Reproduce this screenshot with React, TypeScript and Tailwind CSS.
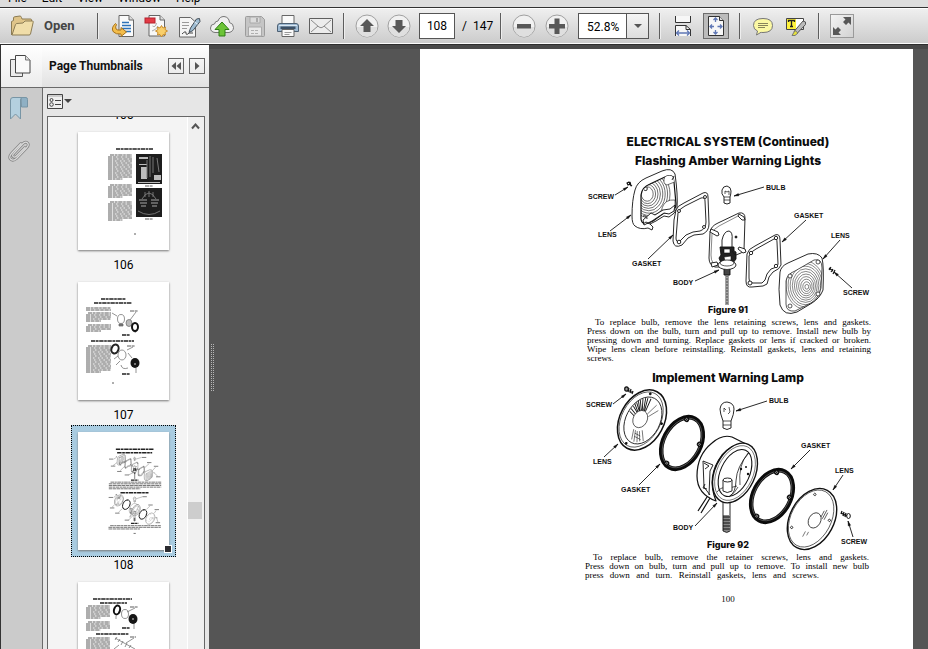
import type { ReactNode } from "react";

const menus = ["File", "Edit", "View", "Window", "Help"];

function Separator() {
  return <span className="mx-[10px] h-[26px] w-[2px] shrink-0 border-l border-[#5d5d5d] bg-[#eeeeee]" />;
}

function IconButton({ label, children }: { label: string; children: ReactNode }) {
  return (
    <button type="button" aria-label={label} className="flex size-6 shrink-0 items-center justify-center">
      {children}
    </button>
  );
}

function RoundIcon({ d }: { d: string }) {
  return (
    <svg viewBox="0 0 24 24" className="size-6">
      <circle cx="12" cy="12" r="11" fill="#f1f1f1" stroke="#a0a0a0" />
      <path d="M2 13a10 10 0 0 0 20 0z" fill="#dfdfdf" />
      <path d={d} fill="#585858" />
    </svg>
  );
}

function FolderIcon() {
  return (
    <svg viewBox="0 0 24 22" className="h-[22px] w-6">
      <path d="M1.5 20V6.5l2-1V3q0-1 1-1.200L10 1q1 0 1.500 1.500L12 4h8.500q1 0 1 1v3" fill="#dfc489" stroke="#8c7c55" />
      <path d="M2 20 5.500 9.500Q6 8.500 7 8.500L13 8l2-2h7.500q1 0 .7 1.200L20.500 19q-.3 1-1.500 1z" fill="#f0dda9" stroke="#8c7c55" />
    </svg>
  );
}

function ConvertIcon() {
  return (
    <svg viewBox="0 0 24 24" className="size-6">
      <path d="M8 1.500h10l4.500 4.500v16.500H8z" fill="#fafafa" stroke="#666" />
      <path d="M18 1.500v4.500h4.500" fill="#ddd" stroke="#666" />
      <path d="M11 8.500h7M11 11.500h9M11 14.500h9M14 17.500h6" stroke="#2f73b8" strokeWidth="1.400" />
      <path d="M4.500 9.500Q-.5 14 2.500 18q2.500 2.500 7.500 2v2.500l5.500-4.500-5.500-4.500V16q-4 .5-5-1-1-2 .5-4.500z" fill="#f3bd4b" stroke="#a8731c" />
    </svg>
  );
}

function CreatePdfIcon() {
  return (
    <svg viewBox="0 0 24 24" className="size-6">
      <path d="M5 1.500h11L20.500 6v16H5z" fill="#f8f8f8" stroke="#666" />
      <path d="M16 1.500V6h4.500" fill="#ddd" stroke="#666" />
      <path d="M8.500 12q3 2 4-3M8 17q4-1 6-5" fill="none" stroke="#aaa" />
      <rect x="1" y="4" width="10" height="5" fill="#e23a45" stroke="#b5202c" />
      <path d="m17.500 11.500 1.500 2.500 2.500-1-.5 2.500 2.500 1.500-2.500 1.500.5 2.500-2.500-.5-1.500 2.500-1.500-2.500-2.500.5.5-2.500-2.500-1.500 2.500-1.500-.5-2.500 2.500 1z" fill="#f9cf6a" stroke="#c98d2c" />
    </svg>
  );
}

function SignIcon() {
  return (
    <svg viewBox="0 0 24 24" className="size-6">
      <path d="M2.500 3.500h11l5 4.500v15h-16z" fill="#f5f5f5" stroke="#666" />
      <path d="M5 8.500h7M5 11.500h7M5 14.500h5" stroke="#9a9a9a" />
      <path d="M5 20q4-4 4-1t3 0h4" fill="none" stroke="#444" />
      <path d="M12 18.500 13.500 14l6-9 3-.5.5 3-7 9z" fill="#9fbdd3" stroke="#454f58" />
      <path d="m17.500 8 3 2" stroke="#e9f1f7" />
    </svg>
  );
}

function CloudIcon() {
  return (
    <svg viewBox="0 0 24 24" className="size-6">
      <path d="M5 18.500Q.5 18 .5 14t4-4q.5-3 3.500-3 1.500-4.500 6-4.500 5 .5 5.500 6 4 1 4 5t-4.500 5z" fill="#f0f0f0" stroke="#777" />
      <path d="m12 8 7 7.500h-4V22H9v-6.500H5z" fill="#6cc437" stroke="#2f7d16" />
    </svg>
  );
}

function SaveIcon() {
  return (
    <svg viewBox="0 0 24 24" className="size-6">
      <path d="M2.500 3.500q0-1 1-1h15l3 3v16q0 1-1 1h-17q-1 0-1-1z" fill="#c5c5c5" stroke="#9c9c9c" />
      <path d="M7 3h10v6H7z" fill="#dcdcdc" stroke="#aaa" />
      <path d="M13 4h2v4h-2z" fill="#aaa" />
      <path d="M5.500 13h13v9h-13z" fill="#e8e8e8" stroke="#aaa" />
      <path d="M8 16.500h8M8 19.500h8" stroke="#b0b0b0" strokeDasharray="3 1" />
    </svg>
  );
}

function PrintIcon() {
  return (
    <svg viewBox="0 0 24 24" className="size-6">
      <path d="M6 10V1.500h12V10" fill="#fafafa" stroke="#666" />
      <path d="M1.500 12q0-2.500 2.500-2.500h16q2.500 0 2.500 2.500v5.500h-21z" fill="#9db9d2" stroke="#4d6073" />
      <path d="M3 11.500h18" stroke="#d8e6f2" />
      <path d="M4.500 12.500h15v2.500h-15z" fill="#3c5066" />
      <path d="M6 15.500h12v7H6z" fill="#fafafa" stroke="#666" />
      <path d="M8.500 18.500h7M8.500 20.500h5" stroke="#999" />
    </svg>
  );
}

function MailIcon() {
  return (
    <svg viewBox="0 0 24 24" className="size-6">
      <path d="M.5 4.500h23v15H.5z" fill="#ececec" stroke="#5f5f5f" />
      <path d="m2 6 8 7q2 1.500 4 0l8-7M2 18l7-6M22 18l-7-6" fill="none" stroke="#8b8b8b" />
    </svg>
  );
}

function FitWidthIcon() {
  return (
    <svg viewBox="0 0 24 24" className="size-6">
      <path d="M4.500 2v6.500h15V2M4.500 22V11.500H15l4.500 4V22" fill="#f7f7f7" stroke="#333" />
      <path d="M15 11.500v4h4.500" fill="none" stroke="#333" />
      <path d="M5.500 19h13M8 16.500 5.500 19 8 21.500M16 16.500l2.500 2.500-2.500 2.500" fill="none" stroke="#5f77b5" strokeWidth="1.300" />
    </svg>
  );
}

function FitPageIcon() {
  return (
    <svg viewBox="0 0 24 24" className="size-6">
      <path d="M4.500 2.500h11l4 4v15h-15z" fill="#f7f7f7" stroke="#333" />
      <path d="M15.500 2.500v4h4" fill="#ddd" stroke="#333" />
      <path d="M11.500 4v4M11.500 16v4M6 12.500h4M13.500 12.500H18M9.500 6l2-2 2 2M9.500 18l2 2 2-2M8 10.500l-2 2 2 2M16 10.500l2 2-2 2" fill="none" stroke="#5f77b5" strokeWidth="1.300" />
    </svg>
  );
}

function CommentIcon() {
  return (
    <svg viewBox="0 0 24 24" className="size-6">
      <path d="M12 4.500q9.500 0 9.500 7t-9.500 7q-1.500 0-2-.2L5.500 21l1-4q-4-1.500-4-5.500 0-7 9.500-7z" fill="#fcf9a4" stroke="#777" />
      <path d="M7 9.500h10M7 11.500h10M7 13.500h7" stroke="#88845b" />
    </svg>
  );
}

function HighlightIcon() {
  return (
    <svg viewBox="0 0 24 24" className="size-6">
      <path d="M2.500 4.500h17v11h-17z" fill="#fff" stroke="#444" />
      <path d="M3 5h9v10H3z" fill="#fff23c" />
      <path d="M4.500 8V6.500h6V8M7.500 6.500v6M6 12.500h3" fill="none" stroke="#222" strokeWidth="1.300" />
      <path d="M10 17.500 19 7l2.500 1v2.500L13 19.500z" fill="#bbb" stroke="#555" />
      <path d="m11 16.500 3 2.500-3 2.500H8z" fill="#e6e23a" stroke="#777" />
    </svg>
  );
}

function PagesIcon() {
  return (
    <svg viewBox="0 0 24 24" className="size-6">
      <path d="M2.500 5.500h12v17h-12z" fill="#ececec" stroke="#555" />
      <path d="M7.500 1.500h10L22 6v13H7.500z" fill="#fafafa" stroke="#444" />
      <path d="M17.500 1.500V6H22" fill="#ddd" stroke="#777" />
    </svg>
  );
}

function BookmarkIcon() {
  return (
    <svg viewBox="0 0 20 24" className="h-6 w-5">
      <path d="M12 1.500h5q1.500 0 1.500 2V11h-6z" fill="#8fb0c4" stroke="#7895a5" />
      <path d="M1.500 4q0-2.500 2.500-2.500h9Q11.500 2 11.500 4v19L6.500 18l-5 5z" fill="#b4d0df" stroke="#7895a5" />
    </svg>
  );
}

function ClipIcon() {
  const wire = "M18 9.500 9.500 18q-2 2-3.300.7t.7-3.300L15.500 6Q18.500 3 20.500 5t-1 5L9.500 20.500q-3.500 3-5.800.8t.8-5.800L14 5.500";
  return (
    <svg viewBox="0 0 24 24" className="size-6">
      <g fill="none" strokeLinecap="round">
        <path d={wire} stroke="#858585" strokeWidth="2.800" />
        <path d={wire} stroke="#dcdcdc" strokeWidth="1.200" />
      </g>
    </svg>
  );
}

function Toolbar() {
  return (
    <div className="flex h-[37px] shrink-0 items-center border-b border-[#2e2e2e] bg-linear-to-b from-[#f0f0f0] to-[#cbcbcb] pl-[10px] shadow-[inset_0_1px_0_#ffffff,inset_0_-1px_0_#fbfbfb]">
      <button type="button" className="flex w-[77px] shrink-0 items-center gap-[10px] text-[13px] font-bold text-[#454545]">
        <FolderIcon />
        Open
      </button>
      <Separator />
      <div className="flex gap-[9px] pl-[2px]">
        <IconButton label="Convert file"><ConvertIcon /></IconButton>
        <IconButton label="Create PDF"><CreatePdfIcon /></IconButton>
        <IconButton label="Sign"><SignIcon /></IconButton>
        <IconButton label="Upload"><CloudIcon /></IconButton>
        <IconButton label="Save"><SaveIcon /></IconButton>
        <IconButton label="Print"><PrintIcon /></IconButton>
        <IconButton label="Email"><MailIcon /></IconButton>
      </div>
      <Separator />
      <div className="flex items-center gap-2">
        <IconButton label="Previous page"><RoundIcon d="m12 5 7 7h-3.500v6h-7v-6H5z" /></IconButton>
        <IconButton label="Next page"><RoundIcon d="m12 19 7-7h-3.500V6h-7v6H5z" /></IconButton>
        <input
          aria-label="Page number"
          defaultValue="108"
          className="h-[26px] w-9 border border-[#555555] bg-white pb-[1px] text-center text-xs text-black"
        />
      </div>
      <span className="w-[35px] shrink-0 pl-[7px] text-xs whitespace-pre text-black">/  147</span>
      <Separator />
      <div className="flex items-center gap-[9px]">
        <IconButton label="Zoom out"><RoundIcon d="M5 10h14v4.500H5z" /></IconButton>
        <IconButton label="Zoom in"><RoundIcon d="M9.500 4.500h5V10H20v4.500h-5.500V20h-5v-5.500H4V10h5.500z" /></IconButton>
        <div className="relative h-[26px] w-[71px] border border-[#555555] bg-white">
          <select aria-label="Zoom level" className="h-full w-full appearance-none pb-[1px] pl-2 text-xs text-black">
            <option>52.8%</option>
          </select>
          <span className="pointer-events-none absolute inset-y-0 right-0 flex w-[22px] items-center justify-center border-l border-[#555555] bg-linear-to-b from-[#f5f5f5] to-[#dddddd]">
            <svg viewBox="0 0 8 4" className="h-1 w-2"><path d="M0 0h8L4 4z" fill="#555" /></svg>
          </span>
        </div>
      </div>
      <Separator />
      <div className="flex items-center gap-2">
        <IconButton label="Fit width"><FitWidthIcon /></IconButton>
        <button type="button" aria-label="Fit page" aria-pressed="true" className="flex size-[26px] items-center justify-center border border-[#6d6d6d] bg-[#bcbcbc]">
          <FitPageIcon />
        </button>
      </div>
      <Separator />
      <div className="flex gap-[9px]">
        <IconButton label="Add comment"><CommentIcon /></IconButton>
        <IconButton label="Highlight text"><HighlightIcon /></IconButton>
      </div>
      <Separator />
      <button type="button" aria-label="Full screen" className="size-6 shrink-0 border border-[#9a9a9a] bg-linear-to-br from-[#f4f4f4] to-[#d2d2d2]">
        <svg viewBox="0 0 22 22" className="size-[22px]">
          <path d="M12 2h8v8l-2.500-2.500L15 10l-3-3 2.500-2.500zM10 20H2v-8l2.500 2.500L7 12l3 3-2.500 2.500z" fill="#585858" />
        </svg>
      </button>
    </div>
  );
}

type Point = [number, number];
type Callout = { text: string; at: Point; from: Point; to: Point };

const callouts91: Callout[] = [
  { text: "SCREW", at: [588, 199], from: [615, 195], to: [628, 187] },
  { text: "LENS", at: [598, 237], from: [610, 231], to: [631, 215] },
  { text: "GASKET", at: [632, 266], from: [648, 259], to: [673, 235] },
  { text: "BODY", at: [673, 285], from: [695, 281], to: [719, 270] },
  { text: "BULB", at: [766, 190], from: [764, 187], to: [734, 196] },
  { text: "GASKET", at: [794, 218], from: [806, 220], to: [782, 242] },
  { text: "LENS", at: [831, 238], from: [840, 240], to: [823, 259] },
  { text: "SCREW", at: [843, 295], from: [852, 288], to: [834, 272] },
];

const callouts92: Callout[] = [
  { text: "SCREW", at: [586, 407], from: [613, 404], to: [626, 394] },
  { text: "LENS", at: [593, 464], from: [604, 457], to: [618, 444] },
  { text: "GASKET", at: [621, 492], from: [639, 485], to: [660, 464] },
  { text: "BODY", at: [673, 530], from: [695, 526], to: [717, 503] },
  { text: "BULB", at: [769, 403], from: [767, 401], to: [736, 411] },
  { text: "GASKET", at: [801, 448], from: [810, 450], to: [791, 469] },
  { text: "LENS", at: [835, 473], from: [843, 475], to: [833, 490] },
  { text: "SCREW", at: [841, 544], from: [853, 537], to: [848, 521] },
];

function Leader({ from, to }: { from: Point; to: Point }) {
  const angle = Math.atan2(to[1] - from[1], to[0] - from[0]);
  const wing = (turn: number) => `${to[0] - 5 * Math.cos(angle + turn)} ${to[1] - 5 * Math.sin(angle + turn)}`;
  return (
    <>
      <path d={`M${from[0]} ${from[1]}L${to[0]} ${to[1]}`} />
      <path d={`M${to[0]} ${to[1]}L${wing(0.25)}L${wing(-0.25)}Z`} fill="#111" strokeWidth="0.400" />
    </>
  );
}

function Callouts({ items }: { items: Callout[] }) {
  return (
    <>
      <g stroke="#111" strokeWidth="0.900">
        {items.map((item) => (
          <Leader key={item.text + item.at[0]} from={item.from} to={item.to} />
        ))}
      </g>
      <g fill="#111" className="font-['Liberation_Sans',sans-serif] text-[7px] font-bold">
        {items.map((item) => (
          <text key={item.text + item.at[0]} x={item.at[0]} y={item.at[1]}>{item.text}</text>
        ))}
      </g>
    </>
  );
}

const leftFace = "M641 195Q642 187 650 184L667 176Q674 174 674 182L676 204Q676 211 669 213L664 213 653 221Q642 227 641 219Z";
const rightFace = "M786 281Q787 274 795 271L814 260Q822 258 822 268L821 288Q819 298 811 303L795 311Q786 312 786 304Z";

// Flashing amber light, exploded from the left lens to the right lens.
function AmberLightArt({ id, line = 0.9 }: { id: string; line?: number }) {
  return (
    <g fill="#fff" stroke="#111" strokeWidth={line} strokeLinejoin="round">
      <clipPath id={`${id}-left`}><path d={leftFace} /></clipPath>
      <clipPath id={`${id}-right`}><path d={rightFace} /></clipPath>

      <path d="M627 183l2-1 1 2-2 1zM629 184l3 2M630 182l1 4" strokeWidth="1.200" />
      <path d="M635 190Q637 182 646 178L662 171Q672 167 675 174Q678 195 677 208Q675 214 669 217L664 216 656 221 650 224 653 227 652 230 648 228Q640 230 635 226Q632 224 632 216Q632 200 635 190Z" />
      <path d={leftFace} strokeWidth="1.200" />
      <g clipPath={`url(#${id}-left)`} fill="none" strokeWidth="0.600">
        {[6, 8, 10, 12, 14, 16, 18, 20].map((r) => (
          <ellipse key={r} cx={646 + r * 0.2} cy="194" rx={r} ry={r * 1.2} />
        ))}
        <path d="M662 208q3-9 13-8v14h-13zM665 176q-3 8 2 9l10-4v-8z" fill="#fff" />
      </g>
      <path d="M643 220l8-7 4 2 8-5 7-1 5-4-1 6-5 3-5-1-12 8-8 4z" />
      <path d="M644 190q4 2 3-3M643 216q4-1 4 3M674 176l-2 4M650 224l-4-2-3 2" fill="none" />

      <path d="M676 210Q677 206 684 203L703 193Q708 191 708 197L709 224Q709 231 703 234L694 235 688 238 682 245Q674 249 673 241L674 220Z" />
      <path d="M678 213Q679 209 685 206L701 198Q705 197 705 201L706 222Q706 229 700 231L693 232 686 235 680 241Q676 243 676 238Z" />
      <g><circle cx="679" cy="211" r="1.500" /><circle cx="705" cy="197" r="1.500" /><circle cx="704" cy="227" r="1.500" /><circle cx="679" cy="242" r="1.800" /></g>

      <path d="M710 232Q711 226 718 223L739 213Q745 212 745 218L744 250Q743 253 736 255L722 267 715 267Q709 265 709 258Z" />
      <path d="M713 263Q711 260 711 255L712 234Q713 229 719 226L738 216" fill="none" strokeWidth="0.500" />
      <path d="M711 229l7 3 1 3-2 1-7-4zM739 214l5 3 1 3-3 0-4-4zM739 247l6 2 1 3-3 1-5-4zM711 263l6-1 1 3-6 2z" />
      <path d="M722 248V240Q724 231 729 231 733 232 732 240V248" />
      <circle cx="736" cy="237" r="1" fill="#111" />
      <path d="M720 247h14v4l2 1v7l-3 4h-12l-2-5 2-3z" fill="#222" />
      <path d="M724 249h6v4h-6zM724 257l7-1v4l-6 1zM732 251l3 4" strokeWidth="0.600" />
      <ellipse cx="727" cy="265" rx="9" ry="4.500" />
      <ellipse cx="727" cy="263" rx="7" ry="3" strokeWidth="0.700" />
      <path d="M724 269v6h6v-6" fill="#444" />
      <path d="M726 275v30M728 275v30" fill="none" stroke="#333" />
      <path d="M727 275v30" stroke="#777" strokeWidth="2" strokeDasharray="2 1" />

      <path d="M724 197Q721 194 722 190 723 186 727 186 731 187 731 191 731 194 730 197V203q-3 2-6 0z" />
      <path d="M724 197h6M725 194v-3l2 1 2-1v4M724 200h6" fill="none" strokeWidth="0.700" />

      <path d="M747 254Q748 249 755 246L775 235Q780 233 780 240L781 265Q780 269 773 272L769 277 767 284 763 286 752 287Q746 288 746 281Z" />
      <path d="M749 256Q750 252 756 249L774 239Q777 238 777 242L778 264Q778 267 771 269L767 274 765 280 762 283 753 283Q749 283 749 278Z" />
      <g><circle cx="751" cy="253" r="1.700" /><circle cx="776" cy="238" r="1.700" /><circle cx="776" cy="266" r="1.700" /><circle cx="750" cy="283" r="2" /></g>

      <path d="M780 272Q781 266 788 263L808 254Q818 252 822 258Q824 266 823 290Q820 298 812 303L797 312Q784 317 780 305Q778 290 780 272Z" />
      <path d={rightFace} strokeWidth="0.700" />
      <g clipPath={`url(#${id}-right)`} fill="none" strokeWidth="0.500">
        {[2, 4, 6, 8, 10, 12, 14, 16, 18, 20].map((r) => (
          <ellipse key={r} cx={807 - r * 0.1} cy={287 - r * 0.1} rx={r * 0.95} ry={r * 1.2} />
        ))}
      </g>
      <g strokeWidth="0.700"><circle cx="790" cy="276" r="2" /><circle cx="818" cy="262" r="2" /><circle cx="818" cy="294" r="2" /><circle cx="790" cy="306" r="2" /></g>
      <path d="M829 268l4 3M831 267l-2 3M833 269l-2 3M835 270l-2 4" fill="none" strokeWidth="1.200" />
    </g>
  );
}

function Gasket({ x, y }: { x: number; y: number }) {
  return (
    <g transform={`translate(${x} ${y}) rotate(28)`} fill="none">
      <ellipse rx="18.500" ry="27.500" stroke="#0b0b0b" strokeWidth="4.500" />
      <ellipse rx="17.500" ry="26.500" stroke="#aaa" strokeWidth="0.400" />
      <g fill="#0b0b0b" stroke="none"><circle cx="-7" cy="-23" r="2.600" /><circle cx="16" cy="-7" r="2.600" /><circle cx="-4" cy="25" r="2.600" /></g>
      <g stroke="#ccc" strokeWidth="0.600"><circle cx="-7" cy="-23" r="1" /><circle cx="16" cy="-7" r="1" /><circle cx="-4" cy="25" r="1" /></g>
    </g>
  );
}

// Round implement lamp: lens, gasket, body, gasket, lens.
function ImplementLampArt({ line = 0.9 }: { line?: number }) {
  return (
    <g fill="#fff" stroke="#111" strokeWidth={line} strokeLinejoin="round">
      <path d="M628 390l5 3M629 388l-1 4M631 389l-1 4M633 391l-1 3" strokeWidth="1.200" />
      <ellipse cx="626.500" cy="389" rx="1.800" ry="2.200" fill="#999" strokeWidth="1.200" />
      <g transform="translate(642 420) rotate(28)">
        <ellipse rx="22" ry="32" strokeWidth="1.500" />
        <ellipse cx="-1" rx="19.500" ry="29.500" strokeWidth="0.600" />
        <ellipse cx="1" rx="17" ry="25" strokeWidth="0.800" />
        <path d="M-14-8-7-4M-14-11-7-5M-13-13-6-6M-12-15-6-7M-11-17-5-8M-9-19-4-8M-7-21-3-9M-5-22-2-9M-15-5-8-2M-2-23-1-9M-15-2-9 0" strokeWidth="0.900" />
        <path d="M6-20 2-8M10-16 4-6" strokeWidth="0.500" />
        <path d="M3 11 8 20M1 12 6 22M-1 12 3 23M5 9l6 9M-3 12 0 22M0 15h6M1 18h7" strokeWidth="0.500" />
        <ellipse cx="-2" rx="7" ry="9" strokeWidth="0.600" />
        <circle cx="-5" cy="-27" r="0.900" fill="#111" /><circle cx="19" cy="-6" r="0.900" fill="#111" /><circle cx="-3" cy="28" r="0.900" fill="#111" />
      </g>
      <Gasket x={682} y={443} />

      <path d="M707 497 698 511M710 498 701 513" fill="none" strokeWidth="1.200" />
      <path d="M723 500h7v31q-3 3-7 0z" />
      <path d="M724 515v16M726 515v17M728 515v17M723 517h7M723 520h7M723 523h7M723 526h7M723 529h7" strokeWidth="1" />
      <path d="M716 501Q697 494 697 476 697 455 712 443 722 434 732 437L752 447Q735 440 722 455 706 476 716 501Z" strokeWidth="1.200" />
      <g transform="translate(735 473) rotate(25)">
        <ellipse rx="20" ry="31.500" strokeWidth="1.400" />
        <ellipse rx="18" ry="29" strokeWidth="0.500" />
        <ellipse rx="14.500" ry="25" strokeWidth="1.100" />
        <path d="M4-24Q-1-6 4 6T5 23" fill="none" strokeWidth="0.700" />
      </g>
      <path d="M703 461l10 4-3 6-1 24M703 461l1 26 6 8M704 463l5 3-4 3M705 484l-2 4 4 1" fill="none" />
      <path d="M717 492q4-6 12-4l8-2M738 487q-3 6-9 10M748 453q-10 12-8 32" fill="none" strokeWidth="0.700" />
      <path d="M723 480v11q4 3 9 0v-11z" />
      <ellipse cx="727.500" cy="480" rx="4.500" ry="2" />
      <g fill="#111" stroke="none"><circle cx="741" cy="469" r="1.200" /><circle cx="746" cy="467" r="1" /><circle cx="748" cy="474" r="1.200" /></g>

      <path d="M723 421Q720 413 720 409 721 402 727 402 734 403 734 409 734 414 731 421V428q-4 3-8 0z" />
      <path d="M723 421h8M723 425h8M724 412v-4l2 2M729 407l1 5-2 2" fill="none" strokeWidth="0.700" />

      <Gasket x={772} y={496} />

      <g transform="translate(812 519) rotate(28)">
        <ellipse rx="22" ry="32.500" strokeWidth="1.400" />
        <ellipse cx="-1" rx="20" ry="30.500" strokeWidth="0.600" />
        <ellipse cx="3" rx="6" ry="8" strokeWidth="0.700" />
        <path d="M9-15V-5M7-13v7M11-13v8" strokeWidth="0.600" />
        <path d="M0 14v6M3 13v4" strokeWidth="0.500" />
        <g strokeWidth="0.700"><circle cx="-9" cy="-23" r="1.200" /><circle cx="16" cy="-7" r="1.200" /><circle cx="-14" cy="17" r="1.200" /></g>
      </g>
      <path d="M841 513l6 3M842 511l-1 3M844 512l-1 4M846 513l-1 4" strokeWidth="1.300" />
      <ellipse cx="848.500" cy="516" rx="1.800" ry="2.500" strokeWidth="1" />
    </g>
  );
}

type Block = { x: number; y: number; w: number; rows: number; step?: number; dark?: boolean };

// Rows of broken strokes that stand for text too small to read.
function Greek({ x, y, w, rows, step = 2, dark = false }: Block) {
  return (
    <g stroke={dark ? "#222" : "#5c5c5c"} strokeWidth={step * (dark ? 0.75 : 0.5)}>
      {Array.from({ length: rows }, (_, i) => (
        <path
          key={i}
          d={`M${i === 0 && rows > 2 ? x + step : x} ${y + i * step}H${i === rows - 1 && rows > 2 ? x + w * 0.6 : x + w}`}
          strokeDasharray={`${step * 2.2} ${step * 0.3} ${step * (1.3 + (i % 3) * 0.5)} ${step * 0.3}`}
        />
      ))}
    </g>
  );
}

function Blocks({ items }: { items: Block[] }) {
  return <>{items.map((item) => <Greek key={`${item.x}-${item.y}`} {...item} />)}</>;
}

function Thumb106() {
  return (
    <svg viewBox="0 0 91 118" className="h-full w-full">
      <Blocks items={[
        { x: 38, y: 17, w: 37, rows: 1, dark: true },
        { x: 30, y: 23, w: 24, rows: 13 },
        { x: 30, y: 53, w: 24, rows: 7 },
        { x: 30, y: 70, w: 24, rows: 10 },
        { x: 67, y: 54, w: 8, rows: 1 },
        { x: 67, y: 87, w: 8, rows: 1 },
        { x: 56, y: 102, w: 2, rows: 1 },
      ]} />
      <path d="M58 22h26v30H58zM58 56h26v29H58z" fill="#1d1d1d" />
      <path d="M61 25h9v2h-9zM61 32h8v1h-8zM63 35h6v12h-6zM76 43h7v5h-7zM60 50h22v1H60z" fill="#bbb" />
      <path d="M72 24v21M75 25v16M69 28v18M79 26l2 14" stroke="#777" />
      <path d="M61 68h8M73 68h8M62 71h7M73 71h7M63 74h5M74 74h5" stroke="#ccc" strokeWidth="0.800" />
      <path d="M64 67q7-12 14 0M67 60v5M71 59v6M75 60v5M60 79q11 7 22 0" fill="none" stroke="#888" strokeWidth="0.800" />
    </svg>
  );
}

function Thumb107() {
  return (
    <svg viewBox="0 0 91 118" className="h-full w-full">
      <Blocks items={[
        { x: 23, y: 17, w: 25, rows: 1, dark: true },
        { x: 16, y: 21, w: 38, rows: 1, dark: true },
        { x: 8, y: 26, w: 25, rows: 2 },
        { x: 8, y: 31, w: 25, rows: 5 },
        { x: 8, y: 43, w: 25, rows: 4 },
        { x: 44, y: 53, w: 8, rows: 1, dark: true },
        { x: 13, y: 59, w: 43, rows: 1, dark: true },
        { x: 8, y: 64, w: 25, rows: 14 },
        { x: 44, y: 92, w: 8, rows: 1, dark: true },
        { x: 52, y: 29, w: 8, rows: 1 },
        { x: 49, y: 64, w: 8, rows: 1 },
        { x: 34, y: 101, w: 2, rows: 1 },
      ]} />
      <g fill="none" stroke="#666" strokeWidth="0.700">
        <path d="m34 31 5 3M58 30l-6 8M57 51l1-3M55 65l-6 3M58 91v-5M36 77l4-3M38 83l4-4M43 83q1 5 7 3M50 71l4 5" />
        <ellipse cx="43" cy="37" rx="3.500" ry="4.500" /><ellipse cx="51" cy="41" rx="3" ry="3.500" fill="#bbb" />
        <ellipse cx="44" cy="73" rx="4" ry="5" /><path d="M41 42h4v2h-4z" fill="#777" />
      </g>
      <ellipse cx="57" cy="45" rx="3" ry="4" fill="none" stroke="#111" strokeWidth="2" />
      <ellipse cx="37" cy="67" rx="3.500" ry="4.500" fill="none" stroke="#222" strokeWidth="2" transform="rotate(20 37 67)" />
      <ellipse cx="57" cy="81" rx="4.500" ry="5" fill="#161616" /><circle cx="57" cy="82" r="1" fill="#999" />
    </svg>
  );
}

function Thumb108() {
  return (
    <svg viewBox="420 49 493 640" className="h-full w-full">
      <Blocks items={[
        { x: 625, y: 142, w: 204, rows: 1, step: 11, dark: true },
        { x: 632, y: 161, w: 190, rows: 1, step: 11, dark: true },
        { x: 707, y: 310, w: 40, rows: 1, step: 9, dark: true },
        { x: 587, y: 321, w: 284, rows: 5, step: 9 },
        { x: 650, y: 378, w: 152, rows: 1, step: 11, dark: true },
        { x: 707, y: 545, w: 40, rows: 1, step: 9, dark: true },
        { x: 585, y: 557, w: 284, rows: 3, step: 9 },
        { x: 721, y: 599, w: 12, rows: 1, step: 9 },
      ]} />
      <AmberLightArt id="thumb" line={1.6} />
      <ImplementLampArt line={1.6} />
      {[...callouts91, ...callouts92].map((c) => (
        <g key={`${c.at[0]}-${c.at[1]}`} stroke="#555">
          <path d={`M${c.from[0]} ${c.from[1]}L${c.to[0]} ${c.to[1]}`} strokeWidth="2" />
          <path d={`M${c.at[0]} ${c.at[1] - 3}h24`} strokeWidth="4" />
        </g>
      ))}
    </svg>
  );
}

function Thumb109() {
  return (
    <svg viewBox="0 0 91 118" className="h-full w-full">
      <Blocks items={[
        { x: 15, y: 17, w: 39, rows: 1, dark: true },
        { x: 22, y: 21, w: 27, rows: 1, dark: true },
        { x: 8, y: 24, w: 24, rows: 7 },
        { x: 8, y: 40, w: 24, rows: 5 },
        { x: 44, y: 46, w: 8, rows: 1, dark: true },
        { x: 18, y: 52, w: 33, rows: 1, dark: true },
        { x: 8, y: 56, w: 24, rows: 12 },
        { x: 52, y: 25, w: 8, rows: 1 },
        { x: 52, y: 55, w: 6, rows: 1 },
      ]} />
      <g fill="none" stroke="#666" strokeWidth="0.700">
        <ellipse cx="47" cy="32" rx="3.500" ry="4.500" />
        <path d="M57 26l-8 4M56 47v-6M38 37v-3M56 56l-8 5M36 67l5-4M37 56 57 67M39 55l-2 3M42 57l-2 3M45 59l-2 4M49 61l-2 4M53 63l-2 3" />
      </g>
      <ellipse cx="39" cy="28" rx="3" ry="4.500" fill="none" stroke="#111" strokeWidth="2" transform="rotate(15 39 28)" />
      <ellipse cx="55" cy="37" rx="4.500" ry="5" fill="#161616" /><circle cx="55" cy="37" r="1" fill="#999" />
    </svg>
  );
}

const thumbs = [
  { page: "106", art: <Thumb106 />, selected: false },
  { page: "107", art: <Thumb107 />, selected: false },
  { page: "108", art: <Thumb108 />, selected: true },
  { page: "109", art: <Thumb109 />, selected: false },
];

function ThumbnailList() {
  return (
    <div className="mr-1 ml-1 flex min-h-0 flex-1 overflow-hidden border border-b-0 border-[#666666] bg-[#f4f4f4]">
      <ul className="flex flex-1 flex-col items-center gap-[2px] overflow-hidden pl-3 text-xs leading-4 text-black">
        <li className="flex h-[6px] shrink-0 items-end overflow-hidden">105</li>
        {thumbs.map((thumb) => (
          <li key={thumb.page} className="shrink-0">
            <button type="button" aria-current={thumb.selected} className="flex flex-col items-center">
              <span
                className={`relative block h-[132px] w-[105px] border p-[6px] ${
                  thumb.selected ? "border-dotted border-black bg-[#a9cce1]" : "border-transparent"
                }`}
              >
                <span className="block h-[118px] w-[91px] bg-white shadow-[0_1px_2px_#777777]">{thumb.art}</span>
                {thumb.selected && (
                  <span className="absolute right-[3px] bottom-[3px] size-2 border border-white bg-[#2b2b30]" />
                )}
              </span>
              {thumb.page}
            </button>
          </li>
        ))}
      </ul>
      <div className="flex w-[17px] shrink-0 flex-col items-center border-l border-white bg-[#f0f0f0] pr-[2px]">
        <svg viewBox="0 0 9 7" className="mt-[6px] h-[7px] w-[9px]">
          <path d="m1 5.500 3.500-4 3.500 4" fill="none" stroke="#555" strokeWidth="2" />
        </svg>
        <div className="mt-[372px] h-[17px] w-full bg-[#cdcdcd]" />
      </div>
    </div>
  );
}

function SidePanel() {
  return (
    <aside className="flex w-[209px] shrink-0 flex-col border-l border-[#333333] bg-[#e6e6e6]">
      <header className="flex h-[43px] shrink-0 items-center border-b border-[#6a6a6a] bg-linear-to-b from-white to-[#e2e2e2] pr-1">
        <button type="button" aria-label="Pages" className="flex h-full w-[41px] items-center justify-center bg-linear-to-b from-white to-[#ececec] pr-1">
          <PagesIcon />
        </button>
        <h2 className="flex-1 pl-[7px] text-xs font-bold whitespace-nowrap text-[#111111]">Page Thumbnails</h2>
        <div className="flex gap-[5px]">
          <button type="button" aria-label="Collapse panel" className="size-4 border border-[#666666]">
            <svg viewBox="0 0 14 14" className="size-[14px]"><path d="M7 3v8L2.500 7zM12 3v8L7.500 7z" fill="#555" /></svg>
          </button>
          <button type="button" aria-label="Expand panel" className="size-4 border border-[#666666]">
            <svg viewBox="0 0 14 14" className="size-[14px]"><path d="M5 3v8l4.500-4z" fill="#555" /></svg>
          </button>
        </div>
      </header>
      <div className="flex min-h-0 flex-1">
        <nav className="flex w-[42px] shrink-0 flex-col items-center gap-[18px] border-r border-[#6a6a6a] bg-[#cbcbcb] pt-2 pr-[6px]">
          <button type="button" aria-label="Bookmarks"><BookmarkIcon /></button>
          <button type="button" aria-label="Attachments"><ClipIcon /></button>
        </nav>
        <div className="flex min-w-0 flex-1 flex-col">
          <button type="button" aria-label="Thumbnail options" className="flex h-7 shrink-0 items-center gap-[1px] pb-[2px] pl-1">
            <svg viewBox="0 0 16 15" className="h-[15px] w-4">
              <path d="M.5.500h15v14H.5z" fill="#f0f0f0" stroke="#444" />
              <path d="M1 2h14" stroke="#aaa" />
              <path d="M8 6.500h6M8 10.500h6" stroke="#444" />
              <circle cx="4.500" cy="6" r="1.500" fill="none" stroke="#444" /><circle cx="4.500" cy="10.500" r="1.800" fill="none" stroke="#444" />
            </svg>
            <svg viewBox="0 0 8 4" className="h-1 w-2"><path d="M0 0h8L4 4z" fill="#444" /></svg>
          </button>
          <ThumbnailList />
        </div>
      </div>
    </aside>
  );
}

function Lines({ lines, last }: { lines: string[]; last: ReactNode }) {
  return (
    <p className="font-['Liberation_Serif',serif] text-[9px] leading-[9px] text-black">
      {lines.map((line, i) => (
        <span key={line} className={`block whitespace-nowrap [text-align-last:justify] ${i === 0 ? "pl-2" : ""}`}>
          {line}
        </span>
      ))}
      {last}
    </p>
  );
}

function DocumentPage() {
  return (
    <article className="flex min-h-full w-[493px] shrink-0 flex-col bg-white pt-[85px] pr-[42px] pl-[165px] font-['Inter',sans-serif] text-[#0c0c0c]">
      <h1 className="text-center text-xs leading-4 font-extrabold whitespace-nowrap">ELECTRICAL SYSTEM (Continued)</h1>
      <h2 className="mt-1 text-center text-xs leading-[14px] font-extrabold">Flashing Amber Warning Lights</h2>
      <svg viewBox="585 168 286 137" className="w-full shrink-0 overflow-visible">
        <AmberLightArt id="page" />
        <Callouts items={callouts91} />
      </svg>
      <h3 className="text-center text-[9px] leading-[10px] font-extrabold">Figure 91</h3>
      <div className="mt-[3px] pl-[2px]">
        <Lines
          lines={[
            "To replace bulb, remove the lens retaining screws, lens and gaskets.",
            "Press down on the bulb, turn and pull up to remove. Install new bulb by",
            "pressing down and turning. Replace gaskets or lens if cracked or broken.",
            "Wipe lens clean before reinstalling. Reinstall gaskets, lens and retaining",
          ]}
          last="screws."
        />
      </div>
      <h2 className="mt-2 text-center text-xs leading-[14px] font-extrabold">Implement Warning Lamp</h2>
      <svg viewBox="585 385 286 155" className="w-full shrink-0 overflow-visible">
        <ImplementLampArt />
        <Callouts items={callouts92} />
      </svg>
      <h3 className="text-center text-[9px] leading-[10px] font-extrabold">Figure 92</h3>
      <div className="mt-[3px] pr-[2px]">
        <Lines
          lines={[
            "To replace bulb, remove the retainer screws, lens and gaskets.",
            "Press down on bulb, turn and pull up to remove. To install new bulb",
          ]}
          last={
            <span className="block w-[234px] [text-align-last:justify]">
              press down and turn. Reinstall gaskets, lens and screws.
            </span>
          }
        />
      </div>
      <p className="mt-[14px] text-center font-['Liberation_Serif',serif] text-[9px] leading-[10px]">100</p>
    </article>
  );
}

export default function App() {
  return (
    <div className="flex h-screen flex-col overflow-hidden bg-[#555555] font-['Roboto',sans-serif]">
      <nav className="flex h-2 shrink-0 items-end gap-[15px] overflow-hidden border-b border-[#333333] bg-[#dedede] pl-2 text-xs leading-4 text-black">
        {menus.map((menu) => (
          <button key={menu} type="button" className="pb-[1px]">{menu}</button>
        ))}
      </nav>
      <Toolbar />
      <div className="flex min-h-0 flex-1">
        <SidePanel />
        <main className="flex min-w-0 flex-1 overflow-hidden border-t-4 border-[#494949] pr-[15px]">
          <div role="separator" aria-orientation="vertical" className="pt-[295px] pl-[2px]">
            <svg viewBox="0 0 4 48" className="h-12 w-1">
              <path d="M.5 0v48M2.500 0v48" stroke="#b5b5b5" strokeDasharray="1 1" />
            </svg>
          </div>
          <div className="flex flex-1 justify-end">
            <DocumentPage />
          </div>
        </main>
      </div>
    </div>
  );
}
